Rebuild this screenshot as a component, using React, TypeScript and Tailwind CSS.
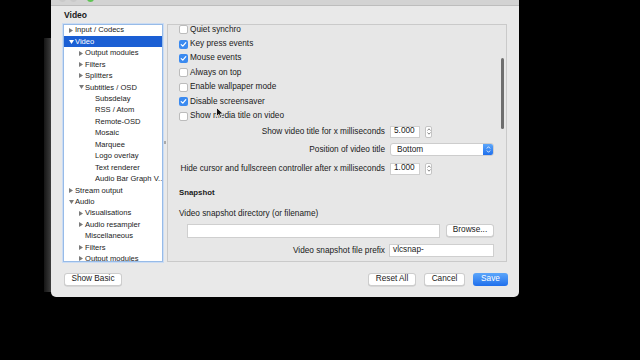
import React from "react";

type TreeNode = {
  label: string;
  level: 0 | 1 | 2;
  arrow?: "right" | "down";
  selected?: boolean;
};

const tree: TreeNode[] = [
  { label: "Input / Codecs", level: 0, arrow: "right" },
  { label: "Video", level: 0, arrow: "down", selected: true },
  { label: "Output modules", level: 1, arrow: "right" },
  { label: "Filters", level: 1, arrow: "right" },
  { label: "Splitters", level: 1, arrow: "right" },
  { label: "Subtitles / OSD", level: 1, arrow: "down" },
  { label: "Subsdelay", level: 2 },
  { label: "RSS / Atom", level: 2 },
  { label: "Remote-OSD", level: 2 },
  { label: "Mosaic", level: 2 },
  { label: "Marquee", level: 2 },
  { label: "Logo overlay", level: 2 },
  { label: "Text renderer", level: 2 },
  { label: "Audio Bar Graph V...", level: 2 },
  { label: "Stream output", level: 0, arrow: "right" },
  { label: "Audio", level: 0, arrow: "down" },
  { label: "Visualisations", level: 1, arrow: "right" },
  { label: "Audio resampler", level: 1, arrow: "right" },
  { label: "Miscellaneous", level: 1 },
  { label: "Filters", level: 1, arrow: "right" },
  { label: "Output modules", level: 1, arrow: "right" },
];

const checks: { label: string; on: boolean }[] = [
  { label: "Quiet synchro", on: false },
  { label: "Key press events", on: true },
  { label: "Mouse events", on: true },
  { label: "Always on top", on: false },
  { label: "Enable wallpaper mode", on: false },
  { label: "Disable screensaver", on: true },
  { label: "Show media title on video", on: false },
];

const indent = ["pl-[5px]", "pl-[15px]", "pl-[25px]"];

const Arrow = ({ dir, light }: { dir?: "right" | "down"; light?: boolean }) => {
  const fill = light ? "#ffffff" : "#7a7a7a";
  if (dir === "right")
    return (
      <svg width="4" height="5" viewBox="0 0 4 5" className="mr-[2px] shrink-0">
        <path d="M0 0L4 2.5L0 5z" fill={fill} />
      </svg>
    );
  if (dir === "down")
    return (
      <svg width="5" height="4" viewBox="0 0 5 4" className="mr-[1px] shrink-0">
        <path d="M0 0H5L2.5 4z" fill={fill} />
      </svg>
    );
  return <span className="w-[6px] shrink-0" />;
};

const Checkbox = ({ on }: { on: boolean }) =>
  on ? (
    <span className="w-[9px] h-[9px] rounded-[2px] bg-[#3a8af0] flex items-center justify-center shrink-0">
      <svg width="7" height="7" viewBox="0 0 7 7">
        <path d="M1.2 3.6L2.8 5.2L5.8 1.6" fill="none" stroke="#fff" strokeWidth="1.2" strokeLinecap="round" strokeLinejoin="round" />
      </svg>
    </span>
  ) : (
    <span className="w-[9px] h-[9px] rounded-[2px] bg-white border border-[#bcbcbc] shrink-0" />
  );

const Stepper = () => (
  <span className="ml-[5px] w-[7px] h-[12px] rounded-[2px] bg-white border border-[#c4c4c4] flex flex-col items-center justify-center gap-[1px]">
    <svg width="4" height="3" viewBox="0 0 4 3">
      <path d="M0.5 2.5L2 0.8L3.5 2.5" fill="none" stroke="#555" strokeWidth="0.7" />
    </svg>
    <svg width="4" height="3" viewBox="0 0 4 3">
      <path d="M0.5 0.5L2 2.2L3.5 0.5" fill="none" stroke="#555" strokeWidth="0.7" />
    </svg>
  </span>
);

const Field = ({ value, className }: { value?: string; className: string }) => (
  <span
    className={`bg-white border border-[#cfcfcf] flex items-center px-[3px] text-[8.25px] text-[#1a1a1a] ${className}`}
  >
    {value}
  </span>
);

const Button = ({ label, className, primary }: { label: string; className: string; primary?: boolean }) => (
  <span
    className={`h-[13px] rounded-[3px] flex items-center justify-center text-[8.25px] ${
      primary
        ? "bg-gradient-to-b from-[#5ca6fa] to-[#1f6fec] text-white"
        : "bg-white border border-[#cdcdcd] text-[#1a1a1a] shadow-[0_0.5px_0.5px_rgba(0,0,0,0.15)]"
    } ${className}`}
  >
    {label}
  </span>
);

export default function App() {
  return (
    <div className="w-[640px] h-[360px] bg-black overflow-hidden flex pl-[44px] font-['Liberation_Sans',Arial,sans-serif] text-[#1a1a1a]">
      <div className="w-[7px] h-[254px] mt-[38px] bg-gradient-to-r from-[#151515] to-[#3e3e3e]" />
      <div className="w-[468px] -mt-[8px] self-start bg-[#e9e9e9] rounded-b-[5px] relative">
        {/* title bar */}
        <div className="h-[13.5px] bg-[#d3d3d3] border-b border-[#bdbdbd] flex items-center relative">
          <div className="flex gap-[4px] pl-[8px]">
            <span className="w-[7px] h-[7px] rounded-full bg-[#c9c9c9]" />
            <span className="w-[7px] h-[7px] rounded-full bg-[#c9c9c9]" />
            <span className="w-[7px] h-[7px] rounded-full bg-[#5fc454] ml-[6px]" />
          </div>
          <span className="flex-1 text-center text-[8px] text-[#4a4a4a] -ml-[42px]">Preferences</span>
        </div>

        <div className="pl-[12px] pr-[12px] pt-[4.5px] pb-[11px]">
          <div className="h-[10px] leading-[10px] text-[8.5px] font-bold pl-[1px]">Video</div>

          <div className="mt-[3.5px] flex h-[238px]">
            {/* tree */}
            <div className="w-[100px] bg-white border border-[#97bbe8] shadow-[0_0_0_1px_#cbdcf3] overflow-hidden">
              {tree.map((n, i) => (
                <div
                  key={i}
                  className={`h-[11.45px] flex items-center text-[7.6px] whitespace-nowrap ${indent[n.level]} ${
                    n.selected ? "bg-[#1b5fd4] text-white" : "text-[#1a1a1a]"
                  }`}
                >
                  <Arrow dir={n.arrow} light={n.selected} />
                  <span className="leading-none">{n.label}</span>
                </div>
              ))}
            </div>

            {/* splitter */}
            <div className="w-[4px] flex items-center justify-center">
              <span className="w-[2px] h-[3px] bg-[#a9a9a9]" />
            </div>

            {/* settings panel */}
            <div className="flex-1 border border-[#cacaca] bg-[#e7e7e7] overflow-hidden relative text-[8.25px]">
              <div className="pl-[11px] -mt-[2px]">
                {checks.map((c) => (
                  <div key={c.label} className="h-[14.4px] flex items-center gap-[2px]">
                    <Checkbox on={c.on} />
                    <span className="leading-none">{c.label}</span>
                  </div>
                ))}

                <div className="mt-[2.4px] h-[12px] flex items-center">
                  <span className="w-[206px] text-right leading-none">Show video title for x milliseconds</span>
                  <Field value="5.000" className="ml-[5px] w-[30px] h-[12px]" />
                  <Stepper />
                </div>

                <div className="mt-[5.5px] h-[13px] flex items-center">
                  <span className="w-[206px] text-right leading-none">Position of video title</span>
                  <span className="ml-[5px] w-[104px] h-[13px] bg-white rounded-[3px] border border-[#cdcdcd] flex items-center overflow-hidden">
                    <span className="flex-1 pl-[6px] leading-none">Bottom</span>
                    <span className="w-[10px] h-full bg-gradient-to-b from-[#5ca6fa] to-[#1f6fec] flex flex-col items-center justify-center gap-[1px]">
                      <svg width="5" height="3" viewBox="0 0 5 3">
                        <path d="M0.8 2.5L2.5 0.7L4.2 2.5" fill="none" stroke="#fff" strokeWidth="0.8" />
                      </svg>
                      <svg width="5" height="3" viewBox="0 0 5 3">
                        <path d="M0.8 0.5L2.5 2.3L4.2 0.5" fill="none" stroke="#fff" strokeWidth="0.8" />
                      </svg>
                    </span>
                  </span>
                </div>

                <div className="mt-[6.5px] h-[12px] flex items-center">
                  <span className="w-[206px] text-right leading-none whitespace-nowrap">
                    Hide cursor and fullscreen controller after x milliseconds
                  </span>
                  <Field value="1.000" className="ml-[5px] w-[30px] h-[12px]" />
                  <Stepper />
                </div>

                <div className="mt-[13px] h-[10px] flex items-center font-bold text-[7.8px]">Snapshot</div>

                <div className="mt-[12px] h-[10px] flex items-center">Video snapshot directory (or filename)</div>

                <div className="mt-[4px] h-[14px] flex items-center">
                  <Field className="ml-[8px] w-[253px] h-[14px]" />
                  <Button label="Browse..." className="ml-[6px] w-[48px] h-[12px]" />
                </div>

                <div className="mt-[6.5px] h-[13px] flex items-center">
                  <span className="w-[206px] text-right leading-none">Video snapshot file prefix</span>
                  <Field value="vlcsnap-" className="ml-[4px] w-[105px] h-[13px]" />
                </div>
              </div>

              {/* overlay scrollbar */}
              <span className="absolute right-[2px] top-[33px] w-[3px] h-[71px] rounded-full bg-[#6e6e6e]" />
            </div>
          </div>

          <div className="mt-[11px] flex items-center">
            <Button label="Show Basic" className="ml-[1px] w-[58px]" />
            <span className="flex-1" />
            <Button label="Reset All" className="w-[48px]" />
            <Button label="Cancel" className="ml-[8px] w-[41px]" />
            <Button label="Save" primary className="ml-[8px] w-[35px] mr-[-1px]" />
          </div>
        </div>

        {/* mouse pointer */}
        <svg width="8" height="12" viewBox="0 0 8 12" className="absolute left-[165px] top-[115px]">
          <path d="M0.5 0.5V9.5L2.8 7.4L4.4 11L5.8 10.4L4.3 6.9H7.3z" fill="#111" stroke="#fff" strokeWidth="0.8" />
        </svg>
      </div>
    </div>
  );
}
